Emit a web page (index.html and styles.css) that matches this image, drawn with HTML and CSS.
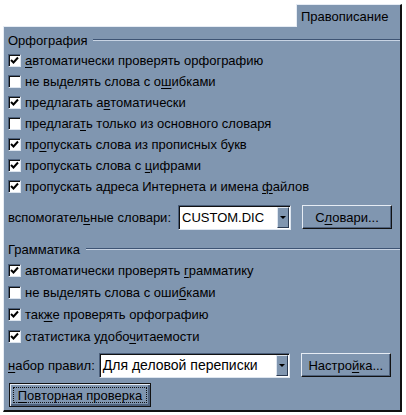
FILE: index.html
```html
<!DOCTYPE html>
<html lang="ru">
<head>
    <meta charset="UTF-8">
    <title>Правописание</title>
    <link rel="stylesheet" href="styles.css">
</head>
<body>
    <div class="tabstrip">
        <div class="tab">Правописание</div>
    </div>

    <div class="panel">
        <div class="group-title"><span>Орфография</span><div class="rule"></div></div>

        <div class="row"><span class="box checked"></span><span><u>а</u>втоматически проверять орфографию</span></div>
        <div class="row"><span class="box"></span><span>не выделять слова с о<u>ш</u>ибками</span></div>
        <div class="row"><span class="box checked"></span><span>предлагать а<u>в</u>томатически</span></div>
        <div class="row"><span class="box"></span><span>предлага<u>т</u>ь только из основного словаря</span></div>
        <div class="row"><span class="box checked"></span><span>пр<u>о</u>пускать слова из прописных букв</span></div>
        <div class="row"><span class="box checked"></span><span>пропускать слова с <u>ц</u>ифрами</span></div>
        <div class="row"><span class="box checked"></span><span>пропускать адреса Интернета и имена <u>ф</u>айлов</span></div>

        <div class="field dict">
            <span class="label">вспомогател<u>ь</u>ные словари:</span>
            <div class="combo small"><span class="value">CUSTOM.DIC</span><span class="arrow"></span></div>
            <button class="btn dict-btn">С<u>л</u>овари...</button>
        </div>

        <div class="group-title grammar"><span>Грамматика</span><div class="rule"></div></div>

        <div class="row tall"><span class="box checked"></span><span>автоматически проверять <u>г</u>рамматику</span></div>
        <div class="row tall"><span class="box"></span><span>не выделять слова с оши<u>б</u>ками</span></div>
        <div class="row tall"><span class="box checked"></span><span>так<u>ж</u>е проверять орфографию</span></div>
        <div class="row tall"><span class="box checked"></span><span>статистика удобо<u>ч</u>итаемости</span></div>

        <div class="field rules">
            <span class="label"><u>н</u>абор правил:</span>
            <div class="combo wide"><span class="value">Для деловой переписки</span><span class="arrow"></span></div>
            <button class="btn setup-btn">Настро<u>й</u>ка...</button>
        </div>

        <button class="btn default recheck"><span class="focus"><u>П</u>овторная проверка</span></button>
    </div>
</body>
</html>
```

FILE: styles.css
```css
* {
    margin: 0;
    padding: 0;
    box-sizing: border-box;
}

body {
    width: 406px;
    height: 415px;
    background-color: white;
    color: black;
    font-family: 'Liberation Sans', Arial, sans-serif;
    font-size: 13px;
    overflow: hidden;
}

u {
    text-decoration-thickness: 1px;
    text-underline-offset: 2px;
}

.tabstrip {
    height: 26px;
    padding-top: 4px;
    padding-right: 4px;
    display: flex;
    justify-content: flex-end;
}

.tab {
    width: 106px;
    height: 23px;
    margin-bottom: -1px;
    position: relative;
    padding: 4px 0 0 4px;
    background-color: #8096b0;
    border-top: 1px solid #e6ecf4;
    border-left: 1px solid #e6ecf4;
    border-right: 2px solid #111;
    font-size: 13px;
}

.panel {
    margin-left: 3px;
    margin-right: 4px;
    height: 386px;
    background-color: #8096b0;
    border-top: 1px solid #e6ecf4;
    border-left: 1px solid #e6ecf4;
    border-right: 2px solid #111;
    border-bottom: 2px solid #111;
    padding: 3px 0 0 4px;
    display: flex;
    flex-direction: column;
}

/* group heading with etched line */
.group-title {
    height: 20px;
    display: flex;
    align-items: center;
    gap: 6px;
}

.group-title .rule {
    flex: 1;
    border-top: 1px solid #3e5474;
    border-bottom: 1px solid #c8d4e4;
}

.grammar {
    margin-top: 9px;
}

.row {
    height: 21px;
    display: flex;
    align-items: center;
    gap: 4px;
}

.row.tall {
    height: 22px;
}

/* checkbox */
.box {
    width: 13px;
    height: 13px;
    background-color: white;
    border-top: 1px solid #4a5e7a;
    border-left: 1px solid #4a5e7a;
    border-right: 1px solid #dde5ef;
    border-bottom: 1px solid #dde5ef;
    box-shadow: inset 1px 1px 0 #111;
    flex-shrink: 0;
}

.box.checked {
    background: white url("data:image/svg+xml,%3Csvg xmlns='http://www.w3.org/2000/svg' width='11' height='11'%3E%3Cpath d='M2 5 L4.5 7.5 L9 2.5' fill='none' stroke='black' stroke-width='2'/%3E%3C/svg%3E") no-repeat 0 0;
}

.field {
    height: 26px;
    display: flex;
    align-items: center;
}

.dict {
    margin-top: 7px;
}

.rules {
    margin-top: 5px;
}

.combo {
    height: 25px;
    display: flex;
    background-color: white;
    border-top: 1px solid #4a5e7a;
    border-left: 1px solid #4a5e7a;
    border-right: 1px solid #dde5ef;
    border-bottom: 1px solid #dde5ef;
    box-shadow: inset 1px 1px 0 #111;
}

.combo .value {
    flex: 1;
    padding: 4px 0 0 3px;
}

.combo.small {
    width: 113px;
    margin-left: 7px;
}

.combo.wide {
    width: 191px;
    margin-left: 4px;
    font-size: 14px;
}

.combo.wide .value {
    padding-top: 3px;
}

.arrow {
    width: 12px;
    margin: 1px 1px 1px 0;
    background-color: #8096b0;
    border-top: 1px solid #dde5ef;
    border-left: 1px solid #dde5ef;
    border-right: 1px solid #2a3a52;
    border-bottom: 1px solid #2a3a52;
    display: flex;
    align-items: center;
    justify-content: center;
}

.arrow::after {
    content: '';
    border-left: 3px solid transparent;
    border-right: 3px solid transparent;
    border-top: 3px solid black;
}

.btn {
    font-family: inherit;
    font-size: 13px;
    color: black;
    background-color: #8096b0;
    border-top: 1px solid #e6ecf4;
    border-left: 1px solid #e6ecf4;
    border-right: 1px solid #111;
    border-bottom: 1px solid #111;
    box-shadow: inset -1px -1px 0 #4e617c;
    height: 24px;
}

.dict-btn {
    width: 90px;
    margin-left: 11px;
}

.setup-btn {
    width: 90px;
    margin-left: 11px;
}

.btn.default {
    border: 1px solid #111;
    box-shadow: inset 1px 1px 0 #e6ecf4, inset -2px -2px 0 #4e617c;
}

.recheck {
    width: 142px;
    height: 24px;
    margin-top: 5px;
    margin-left: 1px;
    padding: 3px;
    display: flex;
}

.recheck .focus {
    flex: 1;
    border: 1px dotted #111;
    display: flex;
    align-items: center;
    justify-content: center;
}
```
